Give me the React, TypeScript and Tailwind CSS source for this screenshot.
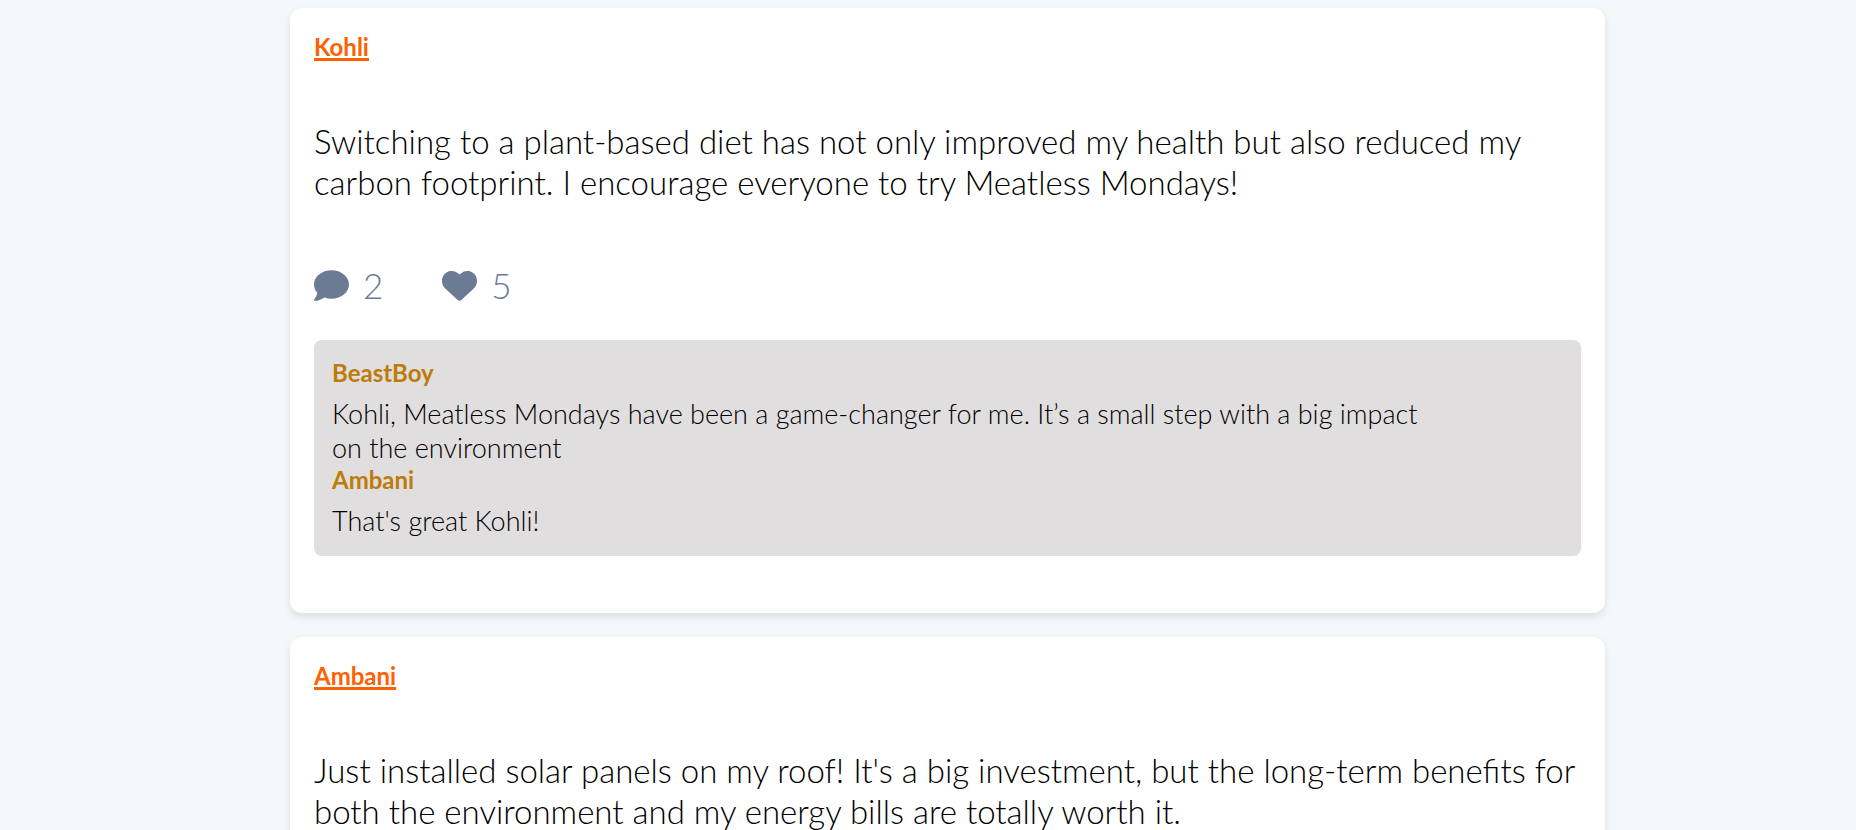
import { FaComment, FaHeart } from "react-icons/fa6";

type Comment = { author: string; text: string };
type Post = {
  author: string;
  text: string;
  likes?: number;
  comments?: Comment[];
};

const posts: Post[] = [
  {
    author: "Kohli",
    text: "Switching to a plant-based diet has not only improved my health but also reduced my carbon footprint. I encourage everyone to try Meatless Mondays!",
    likes: 5,
    comments: [
      {
        author: "BeastBoy",
        text: "Kohli, Meatless Mondays have been a game-changer for me. It’s a small step with a big impact on the environment",
      },
      { author: "Ambani", text: "That's great Kohli!" },
    ],
  },
  {
    author: "Ambani",
    text: "Just installed solar panels on my roof! It's a big investment, but the long-term benefits for both the environment and my energy bills are totally worth it.",
  },
];

function PostCard({ post }: { post: Post }) {
  return (
    <article className="shrink-0 rounded-xl bg-white p-6 shadow-[0_4px_8px_rgba(0,0,0,0.1)]">
      <h2 className="text-2xl leading-[30px] font-bold">
        <a href="#profile" className="text-[#ff6000] underline decoration-3 underline-offset-2">
          {post.author}
        </a>
      </h2>
      <p className="mt-[59px] text-[33px] leading-[41px] font-light text-black">{post.text}</p>
      {post.comments && (
        <>
          <div className="mt-[62px] flex gap-[59px] text-[35px] leading-10 font-light text-[#6b7b93]">
            <button type="button" aria-label="Comments" className="flex items-center gap-3.5">
              <FaComment />
              <span>{post.comments.length}</span>
            </button>
            <button type="button" aria-label="Likes" className="flex items-center gap-3.5">
              <FaHeart />
              <span>{post.likes}</span>
            </button>
          </div>
          <ul className="mt-[35px] mb-[33px] rounded-lg bg-[#e0dedf] p-[18px]">
            {post.comments.map((comment) => (
              <li key={comment.author}>
                <h3 className="text-2xl leading-[30px] font-bold text-[#bd7b0b]">{comment.author}</h3>
                <p className="mt-[9px] w-9/10 text-[27px] leading-[34px] font-light text-black">
                  {comment.text}
                </p>
              </li>
            ))}
          </ul>
        </>
      )}
    </article>
  );
}

export default function App() {
  return (
    <main className="flex h-screen flex-col gap-6 overflow-hidden bg-[#f4f8fb] pt-2 pr-[251px] pl-[290px] font-['Lato',sans-serif]">
      {posts.map((post) => (
        <PostCard key={post.author} post={post} />
      ))}
    </main>
  );
}
